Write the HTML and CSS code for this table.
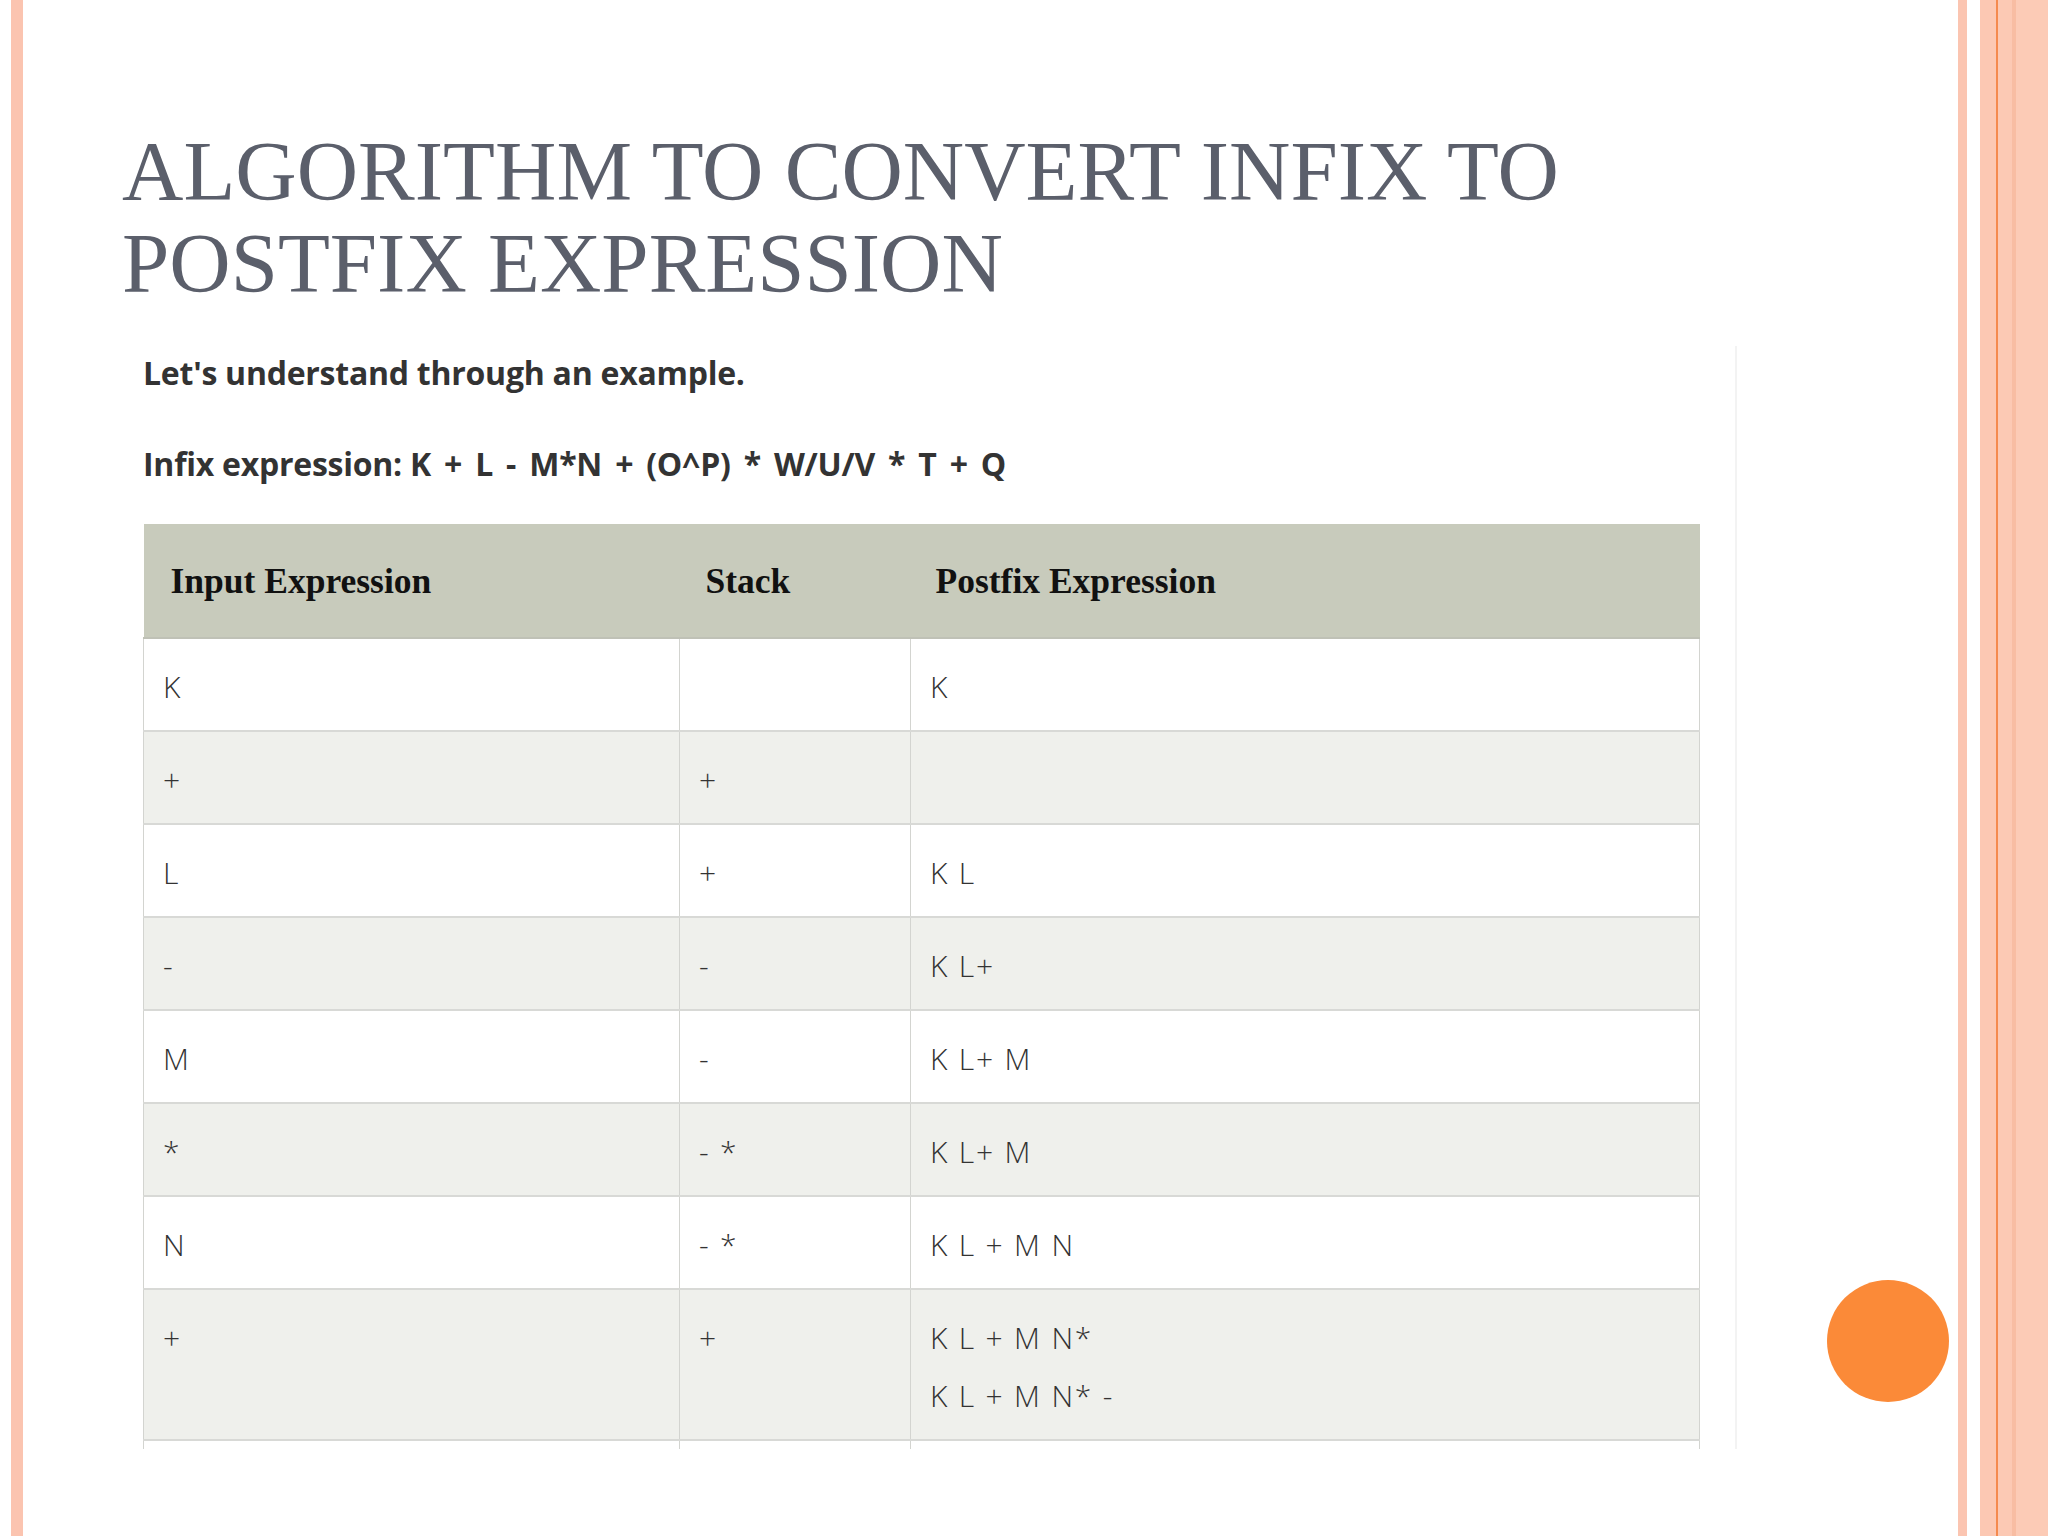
FILE: index.html
```html
<!DOCTYPE html>
<html lang="en">
<head>
<meta charset="utf-8">
<title>Algorithm to convert infix to postfix expression</title>
<link rel="stylesheet" href="styles.css">
</head>
<body>
<div class="slide">
  <div class="left-stripe"></div>
  <main class="main">
    <h1 class="title">ALGORITHM TO CONVERT INFIX TO<br>POSTFIX EXPRESSION</h1>
    <section class="content">
      <p class="lead">Let's understand through an example.</p>
      <p class="lead infix">Infix expression: <span class="expr">K + L - M*N + (O^P) * W/U/V * T + Q</span></p>
      <table class="steps">
        <colgroup>
          <col class="c1"><col class="c2"><col class="c3">
        </colgroup>
        <thead>
          <tr><th>Input Expression</th><th>Stack</th><th>Postfix Expression</th></tr>
        </thead>
        <tbody>
          <tr><td>K</td><td></td><td>K</td></tr>
          <tr><td>+</td><td>+</td><td></td></tr>
          <tr><td>L</td><td>+</td><td>K L</td></tr>
          <tr><td>-</td><td>-</td><td>K L+</td></tr>
          <tr><td>M</td><td>-</td><td>K L+ M</td></tr>
          <tr><td>*</td><td>- *</td><td>K L+ M</td></tr>
          <tr><td>N</td><td>- *</td><td>K L + M N</td></tr>
          <tr><td>+</td><td>+</td><td><div>K L + M N*</div><div>K L + M N* -</div></td></tr>
          <tr><td></td><td></td><td></td></tr>
        </tbody>
      </table>
    </section>
  </main>
  <div class="right-deco">
    <div class="rs rs-a"></div>
    <div class="rs rs-gap"></div>
    <div class="rs rs-b"></div>
    <div class="rs rs-line"></div>
    <div class="rs rs-c"></div>
    <div class="rs rs-dark"></div>
    <div class="rs rs-d"></div>
  </div>
  <div class="dot"></div>
</div>
</body>
</html>
```

FILE: styles.css
```css
html, body {
  margin: 0;
  padding: 0;
  background: #ffffff;
}

.slide {
  position: relative;
  width: 2048px;
  height: 1536px;
  overflow: hidden;
  display: flex;
  padding-left: 11px;
  box-sizing: border-box;
  background: #ffffff;
}

.left-stripe {
  width: 12px;
  flex: none;
  background: #fbc4b0;
}

.main {
  flex: 1;
  padding: 125px 0 0 99px;
  min-width: 0;
}

.title {
  margin: 0;
  font-family: "Liberation Serif", "Times New Roman", serif;
  font-weight: 400;
  font-size: 85px;
  line-height: 92px;
  color: #5b5f6b;
  letter-spacing: 0;
  white-space: nowrap;
}

.content {
  margin: 37px 0 0 8px;
  width: 1607px;
  height: 1103px;
  box-sizing: border-box;
  padding: 3px 0 0 13px;
  border-right: 2px solid #f3f3f3;
  overflow: hidden;
}

.lead {
  margin: 0;
  font-family: "Open Sans", "Liberation Sans", sans-serif;
  font-weight: 700;
  font-size: 32px;
  line-height: 48px;
  color: #333333;
  letter-spacing: -0.25px;
  white-space: nowrap;
}

.infix {
  margin-top: 43px;
}

.expr {
  word-spacing: 5px;
}

.steps {
  margin-top: 36px;
  width: 1556px;
  border-collapse: collapse;
  table-layout: fixed;
  font-family: "Open Sans", "Liberation Sans", sans-serif;
}

.c1 { width: 536px; }
.c2 { width: 231px; }
.c3 { width: 789px; }

.steps th {
  background: #c8cbbc;
  text-align: left;
  font-family: "Liberation Serif", "Times New Roman", serif;
  font-weight: 700;
  font-size: 35.5px;
  line-height: 40px;
  color: #111111;
  padding: 37px 27px 36px;
  border-bottom: 2px solid #bfc1b6;
}

.steps th:nth-child(2) { padding-left: 26px; }
.steps th:nth-child(3) { padding-left: 25px; }

.steps td {
  font-weight: 300;
  font-size: 30px;
  line-height: 58px;
  color: #333333;
  letter-spacing: 1.8px;
  padding: 19px 19px 14px;
  vertical-align: top;
  border-left: 1px solid #d3d4d0;
  border-right: 1px solid #d3d4d0;
  border-bottom: 2px solid #d8d9d6;
  white-space: nowrap;
}

.steps tbody tr:nth-child(even) td {
  background: #eff0ec;
}

.right-deco {
  width: 90px;
  flex: none;
  display: flex;
}

.rs { height: 100%; flex: none; }
.rs-a { width: 9px; background: #fbc5b1; }
.rs-gap { width: 13px; background: #ffffff; }
.rs-b { width: 16px; background: #fcc8b3; }
.rs-line { width: 2px; background: #f58a4e; }
.rs-c { width: 14px; background: #fcc9b4; }
.rs-dark { width: 4px; background: #f8bda3; }
.rs-d { width: 32px; background: #fccbb6; }

.dot {
  position: absolute;
  left: 1827px;
  top: 1280px;
  width: 122px;
  height: 122px;
  border-radius: 50%;
  background: #fb8a38;
}
```
